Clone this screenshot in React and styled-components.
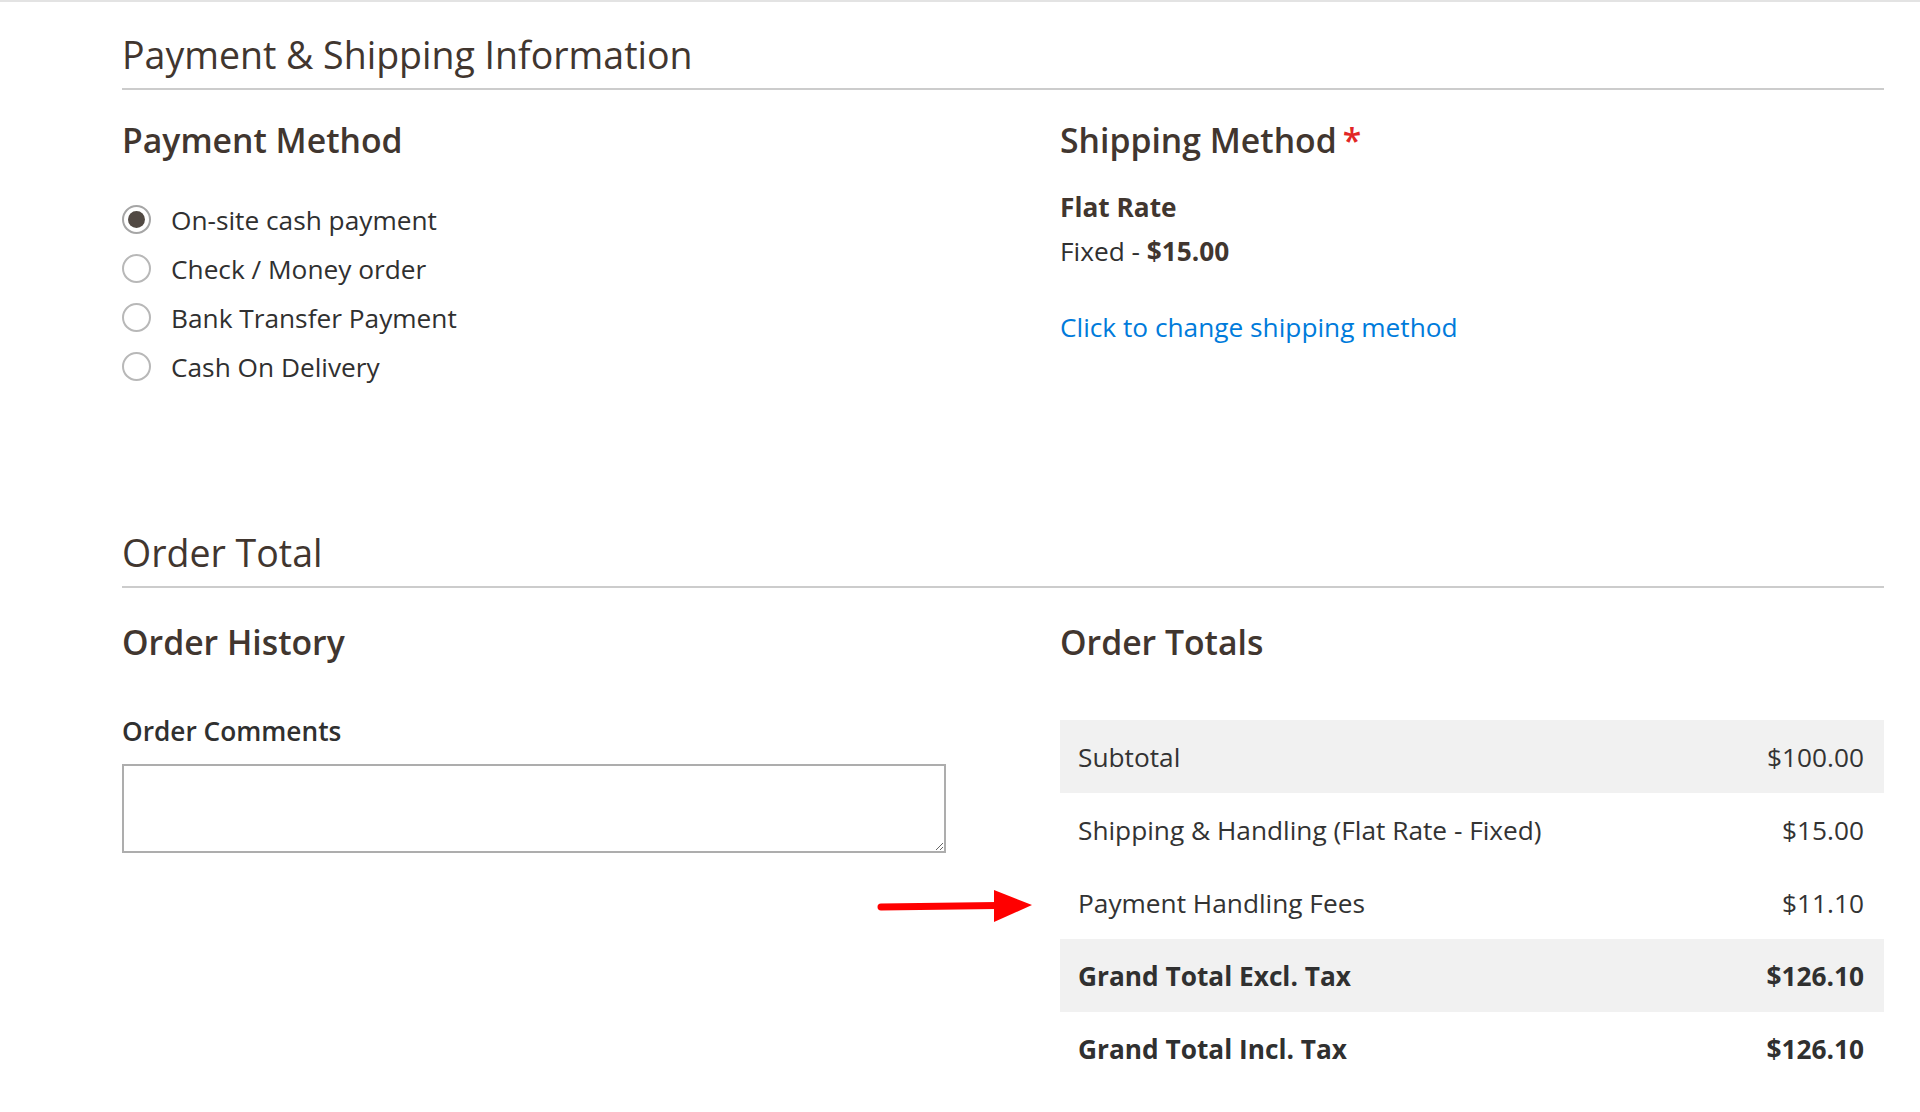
import React from 'react';
import styled, { createGlobalStyle } from 'styled-components';

const GlobalStyle = createGlobalStyle`
  * {
    box-sizing: border-box;
  }

  body {
    margin: 0;
    background: #ffffff;
    font-family: 'Open Sans', 'Liberation Sans', sans-serif;
    color: #303030;
  }
`;

const Page = styled.div`
  border-top: 2px solid #e3e3e3;
  padding: 30px 36px 27px 122px;
  min-height: 1112px;
`;

const Section = styled.section`
  margin-top: ${(p) => p.$offset || 0}px;
`;

const SectionTitle = styled.h2`
  margin: 0;
  font-size: 37.5px;
  line-height: 45px;
  font-weight: 400;
  color: #41362f;
  padding-bottom: 11px;
  border-bottom: 2px solid #cccccc;
`;

const Columns = styled.div`
  display: grid;
  grid-template-columns: 1fr 1fr;
  column-gap: 114px;
  margin-top: ${(p) => p.$gap}px;
`;

const Column = styled.div`
  display: flex;
  flex-direction: column;
  min-width: 0;
`;

const ColumnTitle = styled.h3`
  margin: 0;
  font-size: 33.75px;
  line-height: 40px;
  font-weight: 600;
  color: #41362f;
`;

const Required = styled.span`
  color: #e22626;
  margin-left: 6px;
  font-weight: 600;
`;

const RadioList = styled.div`
  display: flex;
  flex-direction: column;
  margin-top: 35.5px;
`;

const RadioRow = styled.label`
  display: flex;
  align-items: center;
  height: 49px;
  gap: 20px;
  font-size: 26.25px;
  color: #303030;
  cursor: pointer;
`;

const RadioMark = styled.span`
  position: relative;
  flex: 0 0 29px;
  width: 29px;
  height: 29px;
  margin-top: -1px;
  border-radius: 50%;
  border: 2px solid ${(p) => (p.$checked ? '#a6a6a6' : '#b8b8b8')};
  background: #fff;

  &::after {
    content: '';
    display: ${(p) => (p.$checked ? 'block' : 'none')};
    position: absolute;
    left: 4px;
    top: 4px;
    width: 17px;
    height: 17px;
    border-radius: 50%;
    background: #514943;
  }
`;

const MethodName = styled.div`
  margin-top: 25px;
  font-size: 26.25px;
  line-height: 44px;
  font-weight: 700;
  color: #41362f;
`;

const MethodPrice = styled.div`
  font-size: 26.25px;
  line-height: 44px;
  color: #303030;

  strong {
    font-weight: 700;
    color: #41362f;
  }
`;

const ChangeLink = styled.a`
  margin-top: 32px;
  font-size: 26.25px;
  line-height: 44px;
  color: #007bdb;
  text-decoration: none;
  align-self: flex-start;
`;

const FieldLabel = styled.label`
  margin-top: 51px;
  font-size: 26.25px;
  line-height: 36px;
  font-weight: 600;
  color: #303030;
`;

const Comments = styled.textarea`
  margin-top: 15px;
  width: 100%;
  height: 89px;
  border: 2px solid #adadad;
  border-radius: 0;
  padding: 10px 16px;
  font-family: inherit;
  font-size: 26.25px;
  resize: vertical;
  outline: none;
`;

const TotalsTable = styled.div`
  margin-top: 58px;
  display: flex;
  flex-direction: column;
`;

const TotalRow = styled.div`
  position: relative;
  display: flex;
  align-items: center;
  justify-content: space-between;
  height: 73px;
  padding: 0 20px 0 18px;
  background: ${(p) => (p.$shaded ? '#f1f1f1' : 'transparent')};
  font-size: 26.25px;
  font-weight: ${(p) => (p.$strong ? 700 : 400)};
  color: ${(p) => (p.$strong ? '#303030' : '#333333')};
`;

const Pointer = styled.svg`
  position: absolute;
  right: calc(100% + 28px);
  top: 24px;
  width: 155px;
  height: 32px;
  overflow: visible;
`;

const paymentMethods = [
  { label: 'On-site cash payment', checked: true },
  { label: 'Check / Money order' },
  { label: 'Bank Transfer Payment' },
  { label: 'Cash On Delivery' },
];

const totals = [
  { label: 'Subtotal', value: '$100.00', shaded: true },
  { label: 'Shipping & Handling (Flat Rate - Fixed)', value: '$15.00' },
  { label: 'Payment Handling Fees', value: '$11.10', pointer: true },
  { label: 'Grand Total Excl. Tax', value: '$126.10', shaded: true, strong: true },
  { label: 'Grand Total Incl. Tax', value: '$126.10', strong: true },
];

const Arrow = () => (
  <Pointer viewBox="0 0 155 32">
    <line x1="4" y1="17" x2="120" y2="15.5" stroke="#ff0000" strokeWidth="7" strokeLinecap="round" />
    <polygon points="117,0 155,15 117,32" fill="#ff0000" />
  </Pointer>
);

export default function App() {
  return (
    <Page>
      <GlobalStyle />
      <Section>
        <SectionTitle>Payment &amp; Shipping Information</SectionTitle>
        <Columns $gap={30}>
          <Column>
            <ColumnTitle>Payment Method</ColumnTitle>
            <RadioList>
              {paymentMethods.map((m) => (
                <RadioRow key={m.label}>
                  <RadioMark $checked={m.checked} />
                  {m.label}
                </RadioRow>
              ))}
            </RadioList>
          </Column>
          <Column>
            <ColumnTitle>
              Shipping Method<Required>*</Required>
            </ColumnTitle>
            <MethodName>Flat Rate</MethodName>
            <MethodPrice>
              Fixed - <strong>$15.00</strong>
            </MethodPrice>
            <ChangeLink href="#">Click to change shipping method</ChangeLink>
          </Column>
        </Columns>
      </Section>

      <Section $offset={138.5}>
        <SectionTitle>Order Total</SectionTitle>
        <Columns $gap={34}>
          <Column>
            <ColumnTitle>Order History</ColumnTitle>
            <FieldLabel htmlFor="order-comments">Order Comments</FieldLabel>
            <Comments id="order-comments" />
          </Column>
          <Column>
            <ColumnTitle>Order Totals</ColumnTitle>
            <TotalsTable>
              {totals.map((t) => (
                <TotalRow key={t.label} $shaded={t.shaded} $strong={t.strong}>
                  {t.pointer && <Arrow />}
                  <span>{t.label}</span>
                  <span>{t.value}</span>
                </TotalRow>
              ))}
            </TotalsTable>
          </Column>
        </Columns>
      </Section>
    </Page>
  );
}
